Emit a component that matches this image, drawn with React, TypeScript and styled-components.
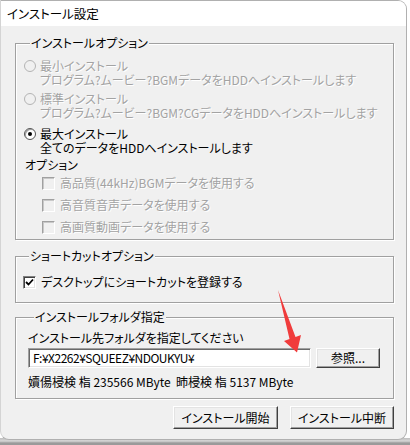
import React from "react";
import styled, { createGlobalStyle } from "styled-components";

const Global = createGlobalStyle`
  html, body { margin: 0; padding: 0; background: #ffffff; }
  body {
    font-family: "Noto Sans CJK JP", "Noto Sans", sans-serif;
    font-size: 12px;
    color: #000;
  }
  * { box-sizing: border-box; }
`;

const Page = styled.div`
  position: relative;
  width: 410px;
  height: 445px;
  overflow: hidden;
  background: linear-gradient(to bottom, #ffffff 0, #ffffff 438px, #bdbdbd 438px, #d6d6d6 441px, #9a9a9a 443px);
`;

const Window = styled.div`
  width: 407px;
  height: 440px;
  border: 1px solid #b0b0b0;
  border-left-color: #d4d4d4;
  border-radius: 0 9px 9px 9px;
  background: #f0f0f0;
  overflow: hidden;
  display: flex;
  flex-direction: column;
  font-feature-settings: "palt";
`;

const TitleBar = styled.div`
  height: 25px;
  flex: none;
  background: #ffffff;
  display: flex;
  align-items: center;
  padding-left: 6px;
  font-size: 12.5px;
  line-height: 14px;
  color: #000;
`;

const Body = styled.div`
  flex: 1;
  padding: 10px 11px 0 14px;
  display: flex;
  flex-direction: column;
`;

const Group = styled.fieldset<{ $pl: number; $pt: number; $pb: number; $mt?: number }>`
  margin: ${(p) => p.$mt ?? 0}px 0 0 0;
  padding: ${(p) => p.$pt}px 8px ${(p) => p.$pb}px ${(p) => p.$pl}px;
  border: 1px solid #a0a0a0;
  box-shadow: inset 1px 1px 0 #ffffff, 1px 1px 0 #ffffff;
  min-width: 0;
  width: 379px;
`;

const Legend = styled.legend`
  margin-left: 6px;
  padding: 0 1px;
  line-height: 14px;
  height: 14px;
  background: #f0f0f0;
  white-space: nowrap;
`;

const Stack = styled.div`
  display: flex;
  flex-direction: column;
`;

const RadioRow = styled.div<{ $mt?: number }>`
  display: grid;
  grid-template-columns: 12px 1fr;
  column-gap: 4px;
  margin-top: ${(p) => p.$mt ?? 0}px;
  line-height: 14px;
`;

const RadioDot = styled.span<{ $disabled?: boolean; $checked?: boolean }>`
  width: 12px;
  height: 12px;
  margin-top: 1px;
  border-radius: 50%;
  border: 1px solid ${(p) => (p.$disabled ? "#b4b4b4" : "#555")};
  background: ${(p) => (p.$disabled ? "#f0f0f0" : "#ffffff")};
  box-shadow: ${(p) => (p.$disabled ? "0 0 0 0" : "inset 1px 1px 0 #a0a0a0")};
  display: flex;
  align-items: center;
  justify-content: center;
  &::after {
    content: "";
    width: 4px;
    height: 4px;
    border-radius: 50%;
    background: #000;
    display: ${(p) => (p.$checked ? "block" : "none")};
  }
`;

const Label = styled.span<{ $disabled?: boolean }>`
  white-space: nowrap;
  color: ${(p) => (p.$disabled ? "#a3a3a3" : "#000")};
  text-shadow: ${(p) => (p.$disabled ? "1px 1px 0 #ffffff" : "none")};
`;

const SubLabel = styled(Label)`
  grid-column: 2;
`;

const Heading = styled.div`
  margin: 3px 0 0 1px;
  line-height: 14px;
`;

const CheckRow = styled.div<{ $indent?: number; $h?: number }>`
  display: flex;
  align-items: center;
  gap: 5px;
  height: ${(p) => p.$h ?? 22}px;
  padding-left: ${(p) => p.$indent ?? 0}px;
  line-height: 14px;
`;

const Box = styled.span<{ $disabled?: boolean }>`
  width: 13px;
  height: 13px;
  flex: none;
  border: 1px solid;
  border-color: ${(p) =>
    p.$disabled ? "#a0a0a0 #ffffff #ffffff #a0a0a0" : "#808080 #ffffff #ffffff #808080"};
  box-shadow: ${(p) =>
    p.$disabled ? "inset 1px 1px 0 #c8c8c8" : "inset 1px 1px 0 #404040, inset -1px -1px 0 #e3e3e3"};
  background: ${(p) => (p.$disabled ? "#f0f0f0" : "#ffffff")};
  display: flex;
  align-items: center;
  justify-content: center;
`;

const FolderLabel = styled.div`
  line-height: 14px;
`;

const PathRow = styled.div`
  display: flex;
  gap: 5px;
  margin-top: 3px;
`;

const PathInput = styled.div`
  width: 283px;
  height: 20px;
  border: 1px solid;
  border-color: #a0a0a0 #ffffff #ffffff #a0a0a0;
  box-shadow: inset 1px 1px 0 #696969, inset -1px -1px 0 #e3e3e3;
  background: #ffffff;
  padding: 2px 0 0 4px;
  line-height: 14px;
  white-space: nowrap;
  font-feature-settings: normal;
  letter-spacing: -0.5px;
`;

const Button = styled.div<{ $w: number; $h?: number }>`
  width: ${(p) => p.$w}px;
  height: ${(p) => p.$h ?? 23}px;
  border: 1px solid;
  border-color: #ffffff #404040 #404040 #ffffff;
  box-shadow: inset -1px -1px 0 #a0a0a0, inset 1px 1px 0 #e3e3e3;
  background: #f0f0f0;
  display: flex;
  align-items: center;
  justify-content: center;
  line-height: 14px;
  white-space: nowrap;
`;

const Info = styled.div`
  margin-top: 7px;
  line-height: 14px;
  white-space: nowrap;
  font-feature-settings: normal;
`;

const Footer = styled.div`
  display: flex;
  justify-content: flex-end;
  gap: 12px;
  margin-top: 7px;
  padding-right: 1px;
`;

const Arrow = styled.svg`
  position: absolute;
  left: 270px;
  top: 285px;
  width: 40px;
  height: 75px;
  pointer-events: none;
`;

const CheckMark = () => (
  <svg width="9" height="9" viewBox="0 0 9 9">
    <path d="M1 4 L3.5 6.5 L8 1.5" fill="none" stroke="#000" strokeWidth="1.8" />
  </svg>
);

export default function App() {
  return (
    <Page>
      <Global />
      <Window>
        <TitleBar>インストール設定</TitleBar>
        <Body>
          <Group $pl={8} $pt={9} $pb={1}>
            <Legend>インストールオプション</Legend>
            <Stack>
              <RadioRow>
                <RadioDot $disabled />
                <Label $disabled>最小インストール</Label>
                <SubLabel $disabled>プログラム?ムービー?BGMデータをHDDへインストールします</SubLabel>
              </RadioRow>
              <RadioRow $mt={5}>
                <RadioDot $disabled />
                <Label $disabled>標準インストール</Label>
                <SubLabel $disabled>プログラム?ムービー?BGM?CGデータをHDDへインストールします</SubLabel>
              </RadioRow>
              <RadioRow $mt={7}>
                <RadioDot $checked />
                <Label>最大インストール</Label>
                <SubLabel>全てのデータをHDDへインストールします</SubLabel>
              </RadioRow>
              <Heading>オプション</Heading>
              <CheckRow $indent={18}>
                <Box $disabled />
                <Label $disabled>高品質(44kHz)BGMデータを使用する</Label>
              </CheckRow>
              <CheckRow $indent={18}>
                <Box $disabled />
                <Label $disabled>高音質音声データを使用する</Label>
              </CheckRow>
              <CheckRow $indent={18}>
                <Box $disabled />
                <Label $disabled>高画質動画データを使用する</Label>
              </CheckRow>
            </Stack>
          </Group>
          <Group $pl={7} $pt={12} $pb={13} $mt={9}>
            <Legend>ショートカットオプション</Legend>
            <CheckRow $h={14}>
              <Box>
                <CheckMark />
              </Box>
              <Label>デスクトップにショートカットを登録する</Label>
            </CheckRow>
          </Group>
          <Group $pl={12} $pt={7} $pb={9} $mt={7}>
            <Legend>インストールフォルダ指定</Legend>
            <FolderLabel>インストール先フォルダを指定してください</FolderLabel>
            <PathRow>
              <PathInput>F:¥X2262¥SQUEEZ¥NDOUKYU¥</PathInput>
              <Button $w={64} $h={20}>参照...</Button>
            </PathRow>
            <Info>嬻偒梫検 栺 235566 MByte&nbsp;&nbsp;昁梫検 栺 5137 MByte</Info>
          </Group>
          <Footer>
            <Button $w={105}>インストール開始</Button>
            <Button $w={104}>インストール中断</Button>
          </Footer>
        </Body>
      </Window>
      <Arrow viewBox="270 285 40 75">
        <polygon
          points="278,290 295.5,337 301,335 297,352.5 284,341 289.5,339"
          fill="#f03c3c"
        />
      </Arrow>
    </Page>
  );
}
